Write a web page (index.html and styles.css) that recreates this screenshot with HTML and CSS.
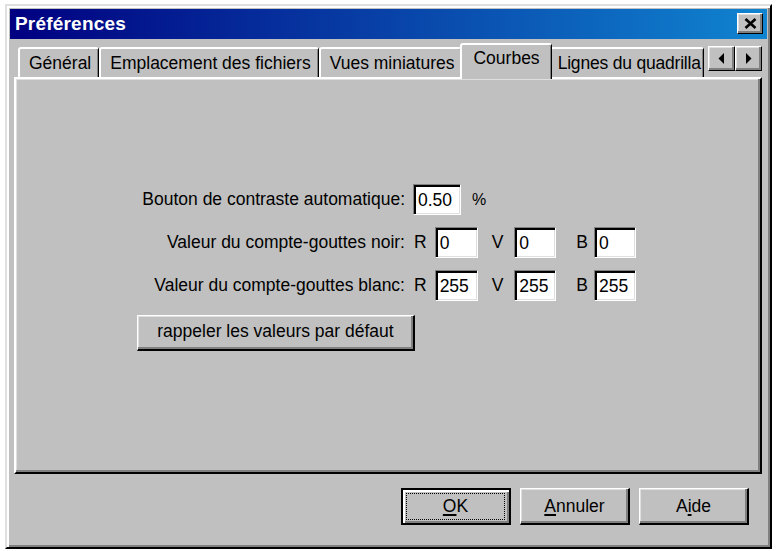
FILE: index.html
```html
<!DOCTYPE html>
<html lang="fr">
<head>
<meta charset="utf-8">
<title>Préférences</title>
<link rel="stylesheet" href="styles.css">
</head>
<body>
<div class="window">
  <div class="titlebar">
    <span class="title">Préférences</span>
    <span class="close" aria-label="Fermer">
      <svg width="13" height="11" viewBox="0 0 13 11"><path d="M1.5 1 L11.5 10 M11.5 1 L1.5 10" stroke="#000" stroke-width="2.6" fill="none"/></svg>
    </span>
  </div>
  <div class="client">
    <div class="tabrow">
      <div class="tablist">
        <div class="tab">Général</div>
        <div class="tab">Emplacement des fichiers</div>
        <div class="tab">Vues miniatures</div>
        <div class="tab active">Courbes</div>
        <div class="tab tab-last">Lignes du quadrilla</div>
      </div>
      <div class="scroller">
        <span class="arrow"><svg width="7" height="11" viewBox="0 0 7 11"><path d="M6 0 L0.5 5.5 L6 11 Z" fill="#000"/></svg></span>
        <span class="arrow"><svg width="7" height="11" viewBox="0 0 7 11"><path d="M1 0 L6.5 5.5 L1 11 Z" fill="#000"/></svg></span>
      </div>
    </div>
    <div class="panel">
      <div class="row">
        <span class="label">Bouton de contraste automatique:</span>
        <span class="field field-wide">0.50</span>
        <span class="unit">%</span>
      </div>
      <div class="row">
        <span class="label">Valeur du compte-gouttes noir:</span>
        <span class="ch ch-r">R</span><span class="field field-r">0</span>
        <span class="ch ch-v">V</span><span class="field">0</span>
        <span class="ch ch-b">B</span><span class="field">0</span>
      </div>
      <div class="row">
        <span class="label">Valeur du compte-gouttes blanc:</span>
        <span class="ch ch-r">R</span><span class="field field-r">255</span>
        <span class="ch ch-v">V</span><span class="field">255</span>
        <span class="ch ch-b">B</span><span class="field">255</span>
      </div>
      <div class="btn reset">rappeler les valeurs par défaut</div>
    </div>
    <div class="actions">
      <div class="btn default"><span class="focus"><u>O</u>K</span></div>
      <div class="btn"><span><u>A</u>nnuler</span></div>
      <div class="btn"><span>A<u>i</u>de</span></div>
    </div>
  </div>
</div>
</body>
</html>
```
FILE: styles.css
```css
html, body {
  margin: 0;
  background: #ffffff;
}
body {
  font-family: "Liberation Sans", Arial, sans-serif;
  font-size: 17.5px;
  color: #000;
}
.window {
  box-sizing: border-box;
  width: 767px;
  height: 545px;
  margin: 4px 0 0 5px;
  padding: 3px;
  background: #c0c0c0;
  border: 2px solid;
  border-color: #dfdfdf #000 #000 #dfdfdf;
  box-shadow: inset 2px 2px #fff, inset -2px -2px #808080;
  display: flex;
  flex-direction: column;
}
.titlebar {
  box-sizing: border-box;
  height: 30px;
  flex: none;
  background: linear-gradient(to right, #000080, #1084d0);
  display: flex;
  align-items: center;
  justify-content: space-between;
  padding: 0 4px 0 5px;
}
.title {
  color: #fff;
  font-weight: bold;
  font-size: 19px;
  letter-spacing: 0.2px;
}
.close {
  box-sizing: border-box;
  width: 26px;
  height: 21px;
  margin-top: -2px;
  background: #c0c0c0;
  border: 1px solid;
  border-color: #fff #000 #000 #fff;
  box-shadow: inset -2px -2px #808080, inset 1px 1px #dfdfdf;
  display: flex;
  align-items: center;
  justify-content: center;
}
.client {
  display: flex;
  flex-direction: column;
  padding: 4px 5px 0 4px;
}
.tabrow {
  display: flex;
  height: 36px;
  position: relative;
  z-index: 1;
}
.tablist {
  flex: 1;
  min-width: 0;
  overflow: hidden;
  display: flex;
  align-items: flex-start;
  padding-left: 4px;
}
.tab {
  flex: none;
  box-sizing: border-box;
  height: 30px;
  margin-top: 4px;
  padding: 0 7px 0 9px;
  line-height: 28px;
  white-space: nowrap;
  background: #c0c0c0;
  border: 2px solid;
  border-bottom: none;
  border-color: #fff #000 transparent #fff;
  border-right-width: 1px;
  box-shadow: inset -1px 0 #808080;
  border-radius: 3px 3px 0 0;
}
.tab.active {
  position: relative;
  z-index: 2;
  height: 36px;
  margin: 0 -2px 0 -2px;
  padding: 0 11px;
  line-height: 26px;
}
.tab-last {
  padding: 0 2px 0 6px;
  letter-spacing: -0.2px;
}
.scroller {
  display: flex;
  align-self: flex-start;
  margin-top: 3px;
}
.arrow {
  box-sizing: border-box;
  width: 27px;
  height: 25px;
  background: #c0c0c0;
  border: 1px solid;
  border-color: #fff #000 #000 #fff;
  box-shadow: inset -2px -2px #808080, inset 1px 1px #dfdfdf;
  display: flex;
  align-items: center;
  justify-content: center;
}
.panel {
  box-sizing: border-box;
  height: 397px;
  margin-top: -2px;
  padding-top: 105px;
  border: 2px solid;
  border-color: #fff #000 #000 #fff;
  box-shadow: inset -2px -2px #808080, inset 1px 1px #dfdfdf;
}
.row {
  display: flex;
  align-items: center;
  height: 31px;
  margin-bottom: 12px;
}
.label {
  width: 389px;
  text-align: right;
  white-space: nowrap;
}
.field {
  box-sizing: border-box;
  width: 42px;
  height: 31px;
  padding: 2px 0 0 4px;
  line-height: 26px;
  background: #fff;
  border: 1px solid;
  border-color: #808080 #fff #fff #808080;
  box-shadow: inset 2px 2px #000, inset -1px -1px #dfdfdf;
}
.field-wide {
  width: 48px;
  margin-left: 8px;
}
.field-r {
  width: 43px;
}
.unit {
  margin-left: 11px;
  font-size: 16px;
}
.ch-r {
  margin-left: 9px;
  margin-right: 8px;
}
.ch-v {
  margin-left: 14px;
  margin-right: 11px;
}
.ch-b {
  margin-left: 20px;
  margin-right: 6px;
}
.btn {
  box-sizing: border-box;
  background: #c0c0c0;
  border: 2px solid;
  border-color: #fff #000 #000 #fff;
  border-top-width: 1px;
  border-left-width: 1px;
  box-shadow: inset -2px -2px #808080, inset 1px 1px #dfdfdf;
  display: flex;
  align-items: center;
  justify-content: center;
  white-space: nowrap;
}
.reset {
  width: 278px;
  height: 36px;
  margin: 14px 0 0 121px;
  padding-bottom: 2px;
}
.actions {
  display: flex;
  justify-content: flex-end;
  gap: 9px;
  margin-top: 14px;
  padding-right: 13px;
}
.actions .btn {
  width: 110px;
  height: 37px;
}
.btn.default {
  border: 2px solid #000;
  box-shadow: inset 2px 2px #fff, inset -2px -2px #808080;
  padding: 3px 4px 3px 3px;
}
.focus {
  flex: 1;
  align-self: stretch;
  display: flex;
  align-items: center;
  justify-content: center;
  border: 1px dotted #000;
}
u {
  text-decoration-thickness: 1.5px;
  text-underline-offset: 2px;
}
```
